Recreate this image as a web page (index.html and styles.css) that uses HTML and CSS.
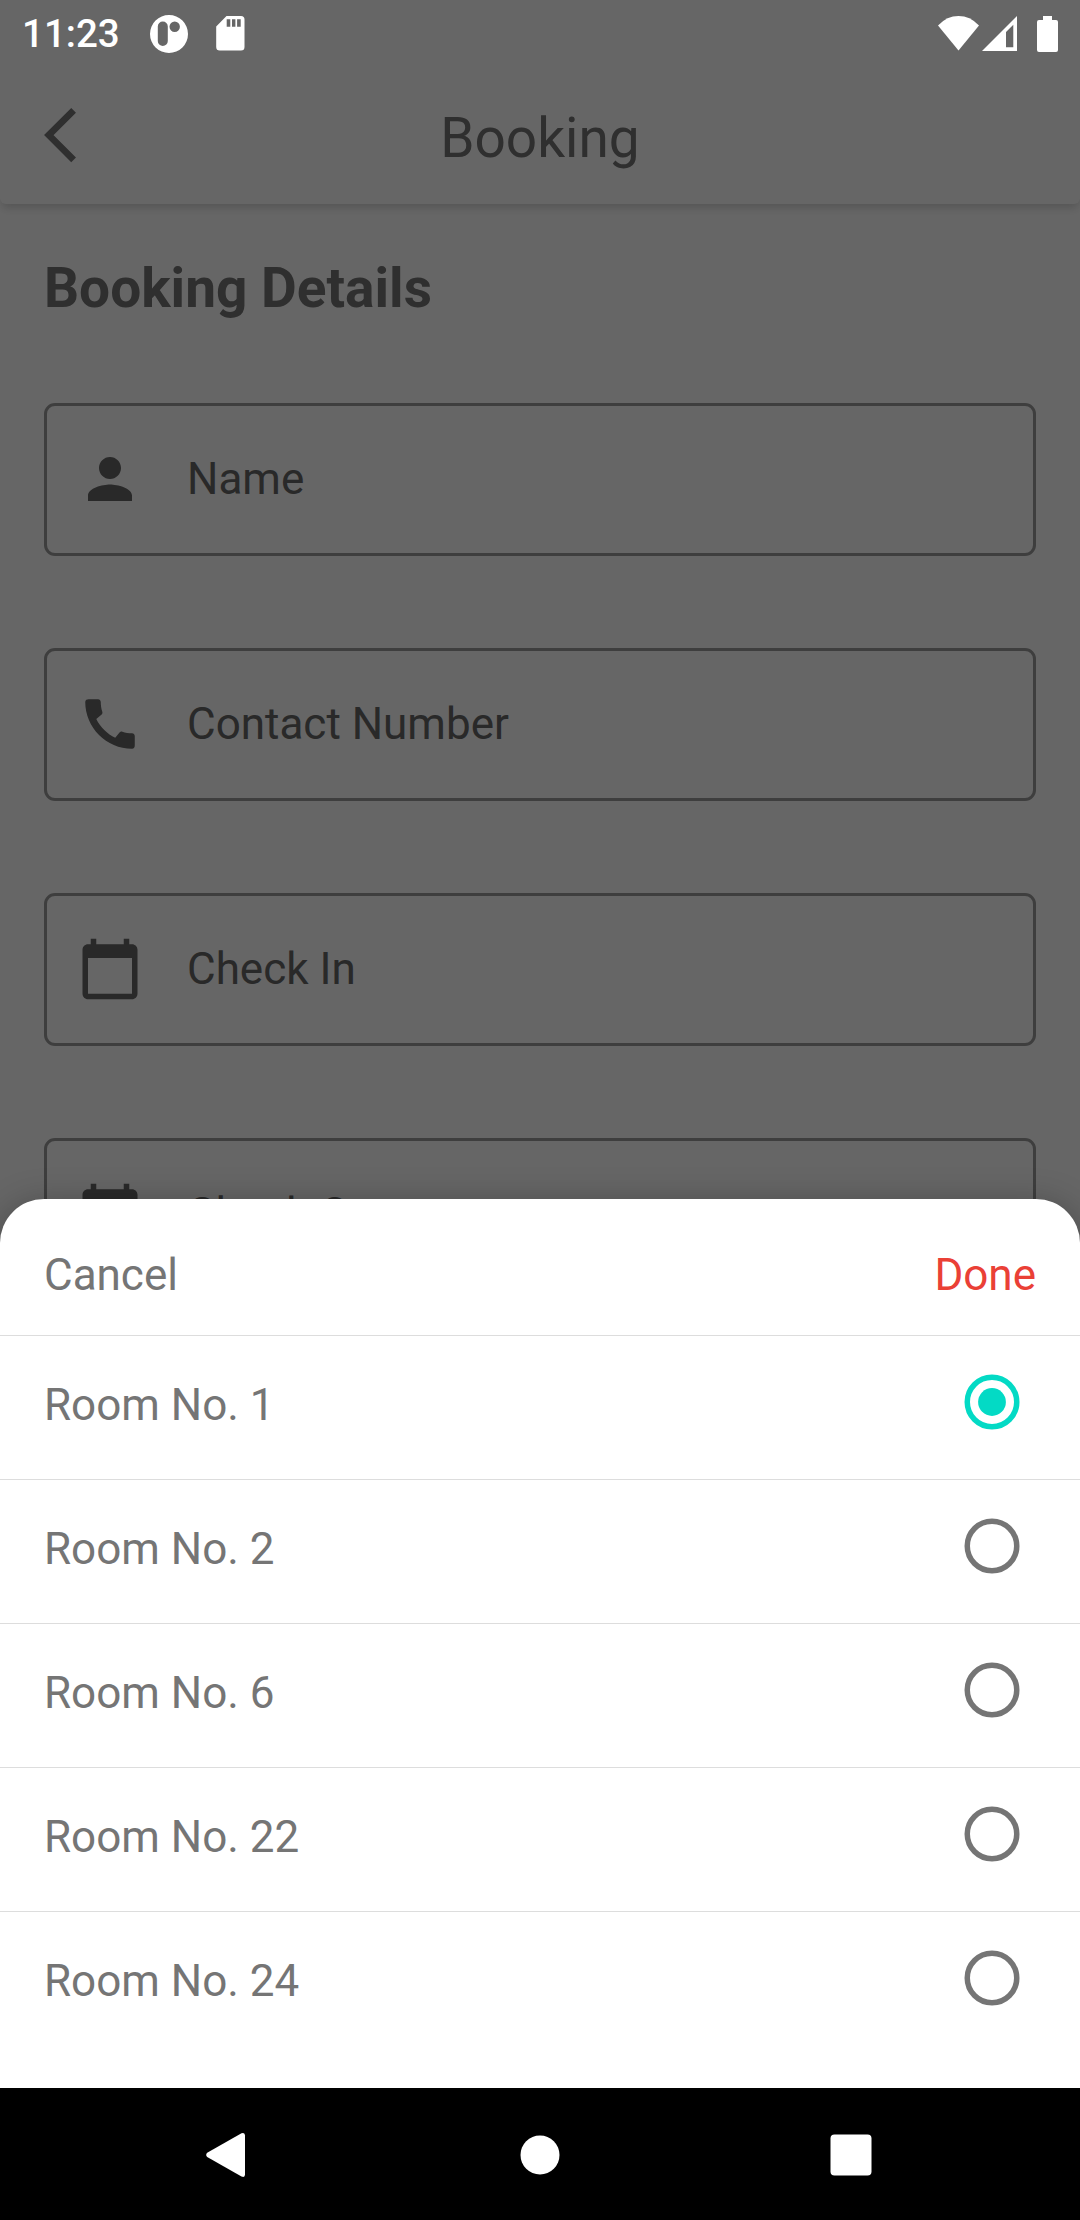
FILE: index.html
```html
<!DOCTYPE html>
<html lang="en">
<head>
<meta charset="utf-8">
<title>Booking</title>
<link rel="stylesheet" href="styles.css">
</head>
<body>
<div class="screen">
  <div class="status-bar">
    <span class="clock">11:23</span>
    <svg class="status-app" width="40" height="40" viewBox="0 0 40 40"><path fill="#fff" fill-rule="evenodd" d="M20 1a19 19 0 1 0 0 38a19 19 0 1 0 0-38zM13.8 7.6a5 5 0 0 1 5 5V27a5 5 0 0 1-10 0V12.600a5 5 0 0 1 5-5zM25.700 7.500a5.200 5.200 0 1 1 0 10.400a5.200 5.200 0 1 1 0-10.400z"/></svg>
    <svg class="status-sd" width="29" height="35" viewBox="0 0 29 35"><path fill="#fff" fill-rule="evenodd" d="M10.500 0H25a3.500 3.500 0 0 1 3.500 3.500V31a3.500 3.500 0 0 1-3.500 3.500H3.700A3.500 3.500 0 0 1 .2 31V10.500zM10.700 3.300v7.400h3.600V3.300zM16 3.300v7.400h3.400V3.300zM21.100 3.300v7.400h3.600V3.300z"/></svg>
    <svg class="status-wifi" width="41" height="35" viewBox="0 0 41 35"><path fill="#fff" d="M0 9.500Q9 .1 20.500.1T41 9.500L20.500 34.500z"/></svg>
    <svg class="status-signal" width="35" height="35" viewBox="0 0 35 35"><path fill="#fff" fill-rule="evenodd" d="M35 0v35H0zM31.300 8.700L24 16v15.300h7.300z"/></svg>
    <svg class="status-battery" width="21" height="36" viewBox="0 0 21 36"><path fill="#fff" d="M6 0h9v4h4a2 2 0 0 1 2 2v28a2 2 0 0 1-2 2H2a2 2 0 0 1-2-2V6a2 2 0 0 1 2-2h4z"/></svg>
  </div>

  <header class="app-bar">
    <svg class="back" width="33" height="56" viewBox="0 0 33 56"><path fill="none" stroke="#757575" stroke-width="6.700" d="M29.600 3.300L4.800 28.100l24.800 24.800"/></svg>
    <h1 class="title">Booking</h1>
  </header>

  <main class="form">
    <h2 class="form-title">Booking Details</h2>
    <div class="field">
      <svg class="icon" viewBox="0 0 24 24"><path d="M12 12c2.210 0 4-1.790 4-4s-1.790-4-4-4-4 1.790-4 4 1.790 4 4 4zm0 2c-2.670 0-8 1.340-8 4v2h16v-2c0-2.660-5.330-4-8-4z"/></svg>
      <span>Name</span>
    </div>
    <div class="field">
      <svg class="icon" viewBox="0 0 24 24"><path d="M20.010 15.380c-1.230 0-2.420-.2-3.530-.56-.35-.12-.74-.03-1.010.24l-1.570 1.970c-2.830-1.350-5.480-3.900-6.890-6.830l1.950-1.660c.27-.28.35-.67.24-1.020-.37-1.110-.56-2.300-.56-3.530 0-.54-.45-.99-.99-.99H4.190C3.650 3 3 3.240 3 3.990 3 13.280 10.730 21 20.010 21c.71 0 .99-.63.99-1.180v-3.450c0-.54-.45-.99-.99-.99z"/></svg>
      <span>Contact Number</span>
    </div>
    <div class="field">
      <svg class="icon" viewBox="0 0 24 24"><path d="M20 3h-1V1h-2v2H7V1H5v2H4c-1.100 0-2 .9-2 2v16c0 1.100.9 2 2 2h16c1.100 0 2-.9 2-2V5c0-1.100-.9-2-2-2zm0 18H4V8h16v13z"/></svg>
      <span>Check In</span>
    </div>
    <div class="field">
      <svg class="icon" viewBox="0 0 24 24"><path d="M20 3h-1V1h-2v2H7V1H5v2H4c-1.100 0-2 .9-2 2v16c0 1.100.9 2 2 2h16c1.100 0 2-.9 2-2V5c0-1.100-.9-2-2-2zm0 18H4V8h16v13z"/></svg>
      <span>Check Out</span>
    </div>
  </main>

  <div class="scrim"></div>

  <section class="sheet">
    <div class="sheet-actions"><span>Cancel</span><span class="done">Done</span></div>
    <div class="room"><span>Room No. 1</span><svg class="radio checked" viewBox="0 0 56 56"><circle class="ring" cx="28" cy="28" r="24.750"/><circle class="dot" cx="28" cy="28" r="13.900"/></svg></div>
    <div class="room"><span>Room No. 2</span><svg class="radio" viewBox="0 0 56 56"><circle class="ring" cx="28" cy="28" r="24.750"/></svg></div>
    <div class="room"><span>Room No. 6</span><svg class="radio" viewBox="0 0 56 56"><circle class="ring" cx="28" cy="28" r="24.750"/></svg></div>
    <div class="room"><span>Room No. 22</span><svg class="radio" viewBox="0 0 56 56"><circle class="ring" cx="28" cy="28" r="24.750"/></svg></div>
    <div class="room"><span>Room No. 24</span><svg class="radio" viewBox="0 0 56 56"><circle class="ring" cx="28" cy="28" r="24.750"/></svg></div>
  </section>

  <nav class="nav-bar">
    <svg width="40" height="46" viewBox="0 0 40 46"><path fill="#fff" d="M1.200 20.800L35.500 1.200Q39 0 39 3.500v39Q39 46 35.500 44.500L1.200 25Q-.8 23 1.200 20.800z"/></svg>
    <svg class="home" width="40" height="40" viewBox="0 0 40 40"><circle cx="20" cy="20" r="19.500" fill="#fff"/></svg>
    <svg width="42" height="42" viewBox="0 0 42 42"><rect x=".5" y=".5" width="41" height="41" rx="4" fill="#fff"/></svg>
  </nav>
</div>
</body>
</html>
```
FILE: styles.css
```css
* { box-sizing: border-box; }

body {
  margin: 0;
  font-family: Roboto, sans-serif;
  font-size: 44px;
  line-height: 52px;
}

svg { display: block; flex: none; }

.screen {
  position: relative;
  width: 1080px;
  height: 2220px;
  overflow: hidden;
  display: flex;
  flex-direction: column;
  background: #fff;
}

.status-bar {
  position: relative;
  z-index: 3;
  flex: none;
  height: 66px;
  padding: 1px 22px 0;
  display: flex;
  align-items: center;
  color: #fff;
}
.clock { width: 127px; padding-top: 1px; font-size: 38.500px; font-weight: 500; }
.status-sd { margin-left: 27px; }
.status-wifi { margin-left: auto; }
.status-signal { margin-left: 3px; }
.status-battery { margin-left: 20px; }

.app-bar {
  flex: none;
  height: 138px;
  padding: 0 44px;
  display: grid;
  grid-template-columns: 33px 1fr 33px;
  align-items: center;
  border-radius: 6px;
  background: #fff;
  box-shadow: 0 6px 9px -2px rgba(0, 0, 0, .16);
  color: #757575;
}
.back { margin-bottom: 1px; }
.title { margin: 6px 0 0; font-size: 55px; font-weight: 400; line-height: 64px; text-align: center; }

.form {
  flex: none;
  padding: 52px 44px 0;
  display: flex;
  flex-direction: column;
  gap: 92px;
}
.form-title { margin: 0 0 -9px; font-size: 55px; font-weight: 700; line-height: 64px; color: #757575; }
.field {
  height: 153px;
  padding: 0 30px 1px;
  display: flex;
  align-items: center;
  gap: 44px;
  border: 3px solid #9b9b9b;
  border-radius: 11px;
  color: #666;
}
.icon { width: 66px; height: 66px; fill: currentColor; }

.scrim { position: absolute; z-index: 1; inset: 0; background: rgba(0, 0, 0, .6); }

.sheet {
  position: absolute;
  z-index: 2;
  left: 0;
  right: 0;
  bottom: 132px;
  height: 889px;
  border-radius: 44px 44px 0 0;
  background: #fff;
  box-shadow: 0 6px 36px rgba(0, 0, 0, .3);
  color: #757575;
}
.sheet-actions {
  height: 137px;
  padding: 15px 44px 0;
  display: flex;
  align-items: center;
  justify-content: space-between;
  border-bottom: 1px solid #ddd;
}
.done { color: #ea4036; }
.room {
  height: 144px;
  padding: 0 60px 5px 44px;
  display: flex;
  align-items: center;
  justify-content: space-between;
  border-bottom: 1px solid #ddd;
}
.room:last-child { border-bottom-color: transparent; }
.radio {
  width: 56px;
  height: 56px;
  margin-bottom: 6px;
  color: #757575;
}
.checked { color: #03dac5; }
.ring { fill: none; stroke: currentColor; stroke-width: 5.500px; }
.dot { fill: currentColor; }

.nav-bar {
  position: relative;
  z-index: 3;
  flex: none;
  height: 132px;
  margin-top: auto;
  padding: 1px 208px 0 206px;
  display: flex;
  align-items: center;
  justify-content: space-between;
  background: #000;
}
.home { margin-left: 4px; }
```
